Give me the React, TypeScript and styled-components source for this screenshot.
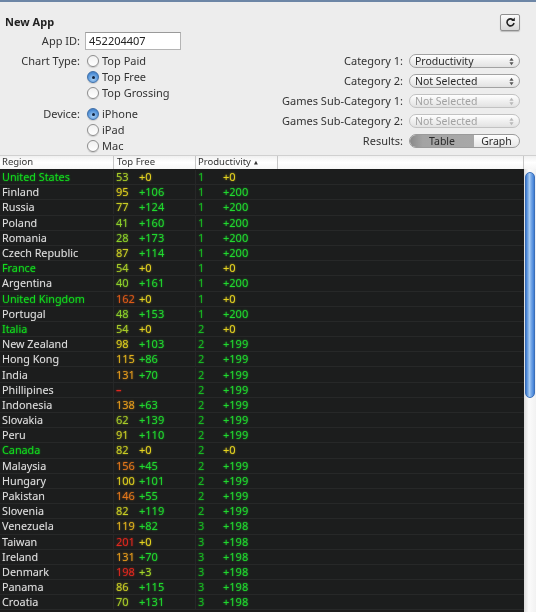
import React from "react";
import styled, { createGlobalStyle } from "styled-components";

const Global = createGlobalStyle`
  html, body { margin: 0; padding: 0; background: #ededed; }
  body { width: 536px; height: 612px; overflow: hidden; font-family: "Noto Sans", "DejaVu Sans", sans-serif; }
`;

const Window = styled.div`
  width: 536px; height: 612px; overflow: hidden; display: flex; flex-direction: column;
  background: #ededed; border-top: 2px solid #6d86a6; box-sizing: border-box;
  filter: blur(0.35px);
`;
const Form = styled.div`
  height: 153px; flex: none; display: flex; justify-content: space-between; box-sizing: border-box;
  padding: 12px 16px 0 5px;
`;
const LeftPane = styled.div`display: flex; flex-direction: column;`;
const Title = styled.div`
  font-size: 11px; font-weight: 700; color: #222; height: 15px; line-height: 15px;
`;
const FieldGrid = styled.div`
  margin-top: 3px; display: grid; grid-template-columns: 75px auto; column-gap: 5px; align-items: start;
`;
const Label = styled.div<{ $h?: number }>`
  font-size: 11px; color: #333; text-align: right; white-space: nowrap;
  line-height: ${p => p.$h ?? 15}px; height: ${p => p.$h ?? 16}px;
`;
const IdInput = styled.div`
  width: 96px; height: 18px; box-sizing: border-box; border: 1px solid #b4b4b4; border-top-color: #9a9a9a;
  background: #fff; font-size: 11px; color: #222; line-height: 16px; padding-left: 3px; margin-bottom: 3px;
`;
const RadioGroup = styled.div<{ $mb?: number }>`
  display: flex; flex-direction: column; margin-bottom: ${p => p.$mb ?? 0}px; margin-left: 2px;
`;
const RadioRow = styled.div`
  display: flex; align-items: center; gap: 3px; height: 16px; font-size: 11px; color: #333; line-height: 14px;
`;
const RadioDot = styled.span<{ $on?: boolean }>`
  width: 12px; height: 12px; flex: none; border-radius: 50%; box-sizing: border-box;
  display: flex; align-items: center; justify-content: center;
  border: 1px solid ${p => (p.$on ? "#3f6fa8" : "#8d8d8d")};
  background: ${p => p.$on
    ? "radial-gradient(circle at 50% 70%, #a9d0f5, #4f8fd6 65%, #3a6fb4)"
    : "linear-gradient(#f0f0f0, #fff)"};
  box-shadow: 0 1px 1px rgba(0,0,0,.15);
  &::after {
    content: ""; display: ${p => (p.$on ? "block" : "none")};
    width: 3px; height: 3px; border-radius: 50%; background: #10233f;
  }
`;
const RightPane = styled.div`display: flex; flex-direction: column; align-items: flex-end;`;
const RefreshButton = styled.div`
  width: 20px; height: 17px; box-sizing: border-box; border: 1px solid #8f8f8f; border-radius: 2px;
  background: linear-gradient(#fbfbfb, #d8d8d8); display: flex; align-items: center; justify-content: center;
  box-shadow: 0 1px 1px rgba(0,0,0,.2);
`;
const SelectGrid = styled.div`
  margin-top: 23px; display: grid; grid-template-columns: auto 111px; column-gap: 6px; row-gap: 6px; align-items: center;
`;
const Select = styled.div<{ $off?: boolean }>`
  height: 14px; box-sizing: border-box; border: 1px solid ${p => (p.$off ? "#c2c2c2" : "#a2a2a2")};
  border-radius: 7px; background: linear-gradient(#fefefe, #e2e2e2);
  display: flex; align-items: center; justify-content: space-between; padding: 0 5px;
  font-size: 10.5px; color: ${p => (p.$off ? "#a2a2a2" : "#2a2a2a")};
`;
const Arrows = styled.svg`display: block; flex: none;`;
const Segmented = styled.div`
  height: 14px; box-sizing: border-box; border: 1px solid #9a9a9a; border-radius: 7px; overflow: hidden;
  display: grid; grid-template-columns: 64px 1fr; font-size: 10.5px; color: #2a2a2a; line-height: 12px; text-align: center;
  background: linear-gradient(#fefefe, #e6e6e6);
`;
const SegmentOn = styled.div`background: linear-gradient(90deg, #8a8a8a, #a4a4a4 20%, #a8a8a8);`;
const Segment = styled.div``;

const TableArea = styled.div`flex: 1; min-height: 0; display: flex; flex-direction: column;`;
const Header = styled.div`
  flex: none; height: 13px; display: grid; grid-template-columns: 114px 82px 82px 246px 12px;
  background: linear-gradient(#f0f0f0, #ffffff 50%, #f6f6f6); border-top: 1px solid #d0d0d0;
`;
const HeaderCell = styled.div`
  font-size: 9.5px; color: #333; line-height: 12px; padding-left: 2px; border-right: 1px solid #c6c6c6; white-space: nowrap;
  &:nth-child(2) { padding-left: 3px; }
  &:last-child { border-right: none; }
`;
const Sort = styled.span`font-size: 5px; vertical-align: 1px; margin-left: 3px;`;
const Body = styled.div`flex: 1; min-height: 0; display: flex;`;
const Rows = styled.div`flex: 1; background: #1c1d1d; overflow: hidden; padding-top: 1px;`;
const Row = styled.div`
  height: 15.2px; display: grid; grid-template-columns: 113px 82px 82px 1fr; align-items: center;
  border-bottom: 1px solid #272828; box-sizing: border-box;
`;
const Region = styled.div<{ $home?: boolean }>`
  padding-left: 2px; white-space: nowrap; font-size: 10.8px;
  color: ${p => (p.$home ? "#12dc1e" : "#dedede")};
  text-shadow: ${p => (p.$home ? "0 0 2px #12dc1e99" : "0 0 1px #dedede55")};
  line-height: 14px;
`;
const Pair = styled.div<{ $first: number }>`
  display: grid; grid-template-columns: ${p => p.$first}px 1fr; padding-left: 2px; font-size: 11px; line-height: 14px;
  height: 14px; border-left: 1px solid #262727; white-space: nowrap;
`;
const Value = styled.span<{ $c: string; $dash?: boolean }>`
  color: ${p => p.$c}; text-shadow: 0 0 2px ${p => p.$c}aa; font-weight: ${p => (p.$dash ? 700 : 400)};
`;
const Track = styled.div`
  width: 12px; flex: none; box-sizing: border-box; background: linear-gradient(90deg, #dcdcdc, #fbfbfb 40%, #f2f2f2);
  padding: 3px 1px 0 1px;
`;
const Thumb = styled.div`
  height: 226px; border-radius: 5px; border: 1px solid #3b6fb8; box-sizing: border-box;
  background: linear-gradient(90deg, #3a78cf, #a9cdf3 45%, #7eaeea 60%, #3f7fd6);
`;

const rankColor = (r: number | null) => {
  if (r === null) return "#e0281e";
  if (r < 50) return "#8cd02a";
  if (r < 75) return "#a8cc28";
  if (r < 93) return "#c8cc24";
  if (r < 112) return "#dccd1e";
  if (r < 125) return "#e0b11e";
  if (r < 140) return "#e49a1c";
  if (r < 160) return "#e2761a";
  if (r < 180) return "#dc5a18";
  return "#e0281e";
};
const deltaColor = (d: number) => (d === 0 ? "#e6d420" : d < 10 ? "#a4d628" : "#20d92e");
const posColor = "#18b822";

type D = [string, number | null, number | null, number, number, boolean?];
const data: D[] = [
  ["United States", 53, 0, 1, 0, true],
  ["Finland", 95, 106, 1, 200],
  ["Russia", 77, 124, 1, 200],
  ["Poland", 41, 160, 1, 200],
  ["Romania", 28, 173, 1, 200],
  ["Czech Republic", 87, 114, 1, 200],
  ["France", 54, 0, 1, 0, true],
  ["Argentina", 40, 161, 1, 200],
  ["United Kingdom", 162, 0, 1, 0, true],
  ["Portugal", 48, 153, 1, 200],
  ["Italia", 54, 0, 2, 0, true],
  ["New Zealand", 98, 103, 2, 199],
  ["Hong Kong", 115, 86, 2, 199],
  ["India", 131, 70, 2, 199],
  ["Phillipines", null, null, 2, 199],
  ["Indonesia", 138, 63, 2, 199],
  ["Slovakia", 62, 139, 2, 199],
  ["Peru", 91, 110, 2, 199],
  ["Canada", 82, 0, 2, 0, true],
  ["Malaysia", 156, 45, 2, 199],
  ["Hungary", 100, 101, 2, 199],
  ["Pakistan", 146, 55, 2, 199],
  ["Slovenia", 82, 119, 2, 199],
  ["Venezuela", 119, 82, 3, 198],
  ["Taiwan", 201, 0, 3, 198],
  ["Ireland", 131, 70, 3, 198],
  ["Denmark", 198, 3, 3, 198],
  ["Panama", 86, 115, 3, 198],
  ["Croatia", 70, 131, 3, 198],
];

const UpDown = ({ off }: { off?: boolean }) => (
  <Arrows width="5" height="9" viewBox="0 0 6 10">
    <path d="M3 0.5 L5.5 4 H0.5 Z M3 9.5 L5.5 6 H0.5 Z" fill={off ? "#b8b8b8" : "#555"} />
  </Arrows>
);

const Radio = ({ on, label }: { on?: boolean; label: string }) => (
  <RadioRow><RadioDot $on={on} />{label}</RadioRow>
);

const selects: [string, string, boolean][] = [
  ["Category 1:", "Productivity", false],
  ["Category 2:", "Not Selected", false],
  ["Games Sub-Category 1:", "Not Selected", true],
  ["Games Sub-Category 2:", "Not Selected", true],
];

export default function App() {
  return (
    <Window>
      <Global />
      <Form>
        <LeftPane>
          <Title>New App</Title>
          <FieldGrid>
            <Label $h={18}>App ID:</Label>
            <IdInput>452204407</IdInput>
            <Label>Chart Type:</Label>
            <RadioGroup $mb={5}>
              <Radio label="Top Paid" />
              <Radio on label="Top Free" />
              <Radio label="Top Grossing" />
            </RadioGroup>
            <Label>Device:</Label>
            <RadioGroup>
              <Radio on label="iPhone" />
              <Radio label="iPad" />
              <Radio label="Mac" />
            </RadioGroup>
          </FieldGrid>
        </LeftPane>
        <RightPane>
          <RefreshButton>
            <svg width="11" height="11" viewBox="0 0 11 11">
              <path d="M8.6 3.6 A3.5 3.5 0 1 0 9 6" fill="none" stroke="#222" strokeWidth="1.6" />
              <path d="M6.2 3.9 H9.8 V0.6 Z" fill="#222" />
            </svg>
          </RefreshButton>
          <SelectGrid>
            {selects.map(([l, v, off]) => (
              <React.Fragment key={l}>
                <Label $h={14}>{l}</Label>
                <Select $off={off}>{v}<UpDown off={off} /></Select>
              </React.Fragment>
            ))}
            <Label $h={14}>Results:</Label>
            <Segmented>
              <SegmentOn>Table</SegmentOn>
              <Segment>Graph</Segment>
            </Segmented>
          </SelectGrid>
        </RightPane>
      </Form>
      <TableArea>
        <Header>
          <HeaderCell>Region</HeaderCell>
          <HeaderCell>Top Free</HeaderCell>
          <HeaderCell>Productivity<Sort>▲</Sort></HeaderCell>
          <HeaderCell />
          <HeaderCell />
        </Header>
        <Body>
          <Rows>
            {data.map(([name, rank, delta, pos, pd, home]) => (
              <Row key={name}>
                <Region $home={home}>{name}</Region>
                <Pair $first={23}>
                  <Value $c={rankColor(rank)} $dash={rank === null}>{rank === null ? "–" : rank}</Value>
                  {delta !== null && <Value $c={deltaColor(delta)}>+{delta}</Value>}
                </Pair>
                <Pair $first={25}>
                  <Value $c={posColor}>{pos}</Value>
                  <Value $c={deltaColor(pd)}>+{pd}</Value>
                </Pair>
                <div />
              </Row>
            ))}
          </Rows>
          <Track><Thumb /></Track>
        </Body>
      </TableArea>
    </Window>
  );
}
